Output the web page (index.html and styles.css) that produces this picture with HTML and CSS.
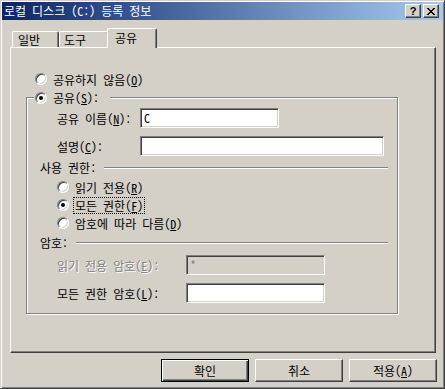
FILE: index.html
```html
<!DOCTYPE html>
<html lang="ko">
<head>
  <meta charset="UTF-8" />
  <title>로컬 디스크 (C:) 등록 정보</title>
  <link rel="stylesheet" href="styles.css">
</head>
<body>
  <div class="window">
    <!-- Caption -->
    <div class="titlebar">
      <span class="title">로컬 디스크 (C:) 등록 정보</span>
      <div class="caption-buttons">
        <span class="cbtn help">?</span>
        <span class="cbtn close">
          <svg width="8" height="7" viewBox="0 0 8 7"><path fill="#000" d="M0 0h2v1H0zM6 0h2v1H6zM1 1h2v1H1zM5 1h2v1H5zM2 2h4v1H2zM3 3h2v1H3zM2 4h4v1H2zM1 5h2v1H1zM5 5h2v1H5zM0 6h2v1H0zM6 6h2v1H6z"/></svg>
        </span>
      </div>
    </div>

    <!-- Tabs -->
    <div class="tabs">
      <div class="tab first">일반</div>
      <div class="tab second">도구</div>
      <div class="tab active">공유</div>
    </div>

    <div class="panel">
      <div class="option top">
        <span class="radio"></span><span>공유하지 않음(<u>O</u>)</span>
      </div>

      <fieldset class="group">
        <legend><span class="legend-inner"><span class="radio checked"></span><span>공유(<u>S</u>):</span></span></legend>

        <div class="field name-row">
          <span class="label">공유 이름(<u>N</u>):</span>
          <span class="input short">C</span>
        </div>
        <div class="field desc-row">
          <span class="label">설명(<u>C</u>):</span>
          <span class="input long"></span>
        </div>

        <div class="sep perm">사용 권한:<span class="line"></span></div>
        <div class="options">
          <div class="option"><span class="radio"></span><span class="text">읽기 전용(<u>R</u>)</span></div>
          <div class="option"><span class="radio checked"></span><span class="text focus">모든 권한(<u>F</u>)</span></div>
          <div class="option"><span class="radio"></span><span class="text">암호에 따라 다름(<u>D</u>)</span></div>
        </div>

        <div class="sep pass">암호:<span class="line"></span></div>
        <div class="field pw ro-row">
          <span class="label disabled">읽기 전용 암호(<u>E</u>):</span>
          <span class="input short off">*</span>
        </div>
        <div class="field pw full-row">
          <span class="label">모든 권한 암호(<u>L</u>):</span>
          <span class="input short"></span>
        </div>
      </fieldset>
    </div>

    <!-- Dialog buttons -->
    <div class="actions">
      <button class="btn default">확인</button>
      <button class="btn">취소</button>
      <button class="btn">적용(<u>A</u>)</button>
    </div>
  </div>
</body>
</html>
```

FILE: styles.css
```css
/* Classic grey dialog */
body {
  margin: 0;
  background-color: #d4d0c8;
  font-family: "Noto Sans CJK KR", sans-serif;
  font-size: 12px;
  /* half-width latin, like the old bitmap font */
  font-feature-settings: "hwid";
  color: #000;
}
.window {
  width: 445px;
  height: 389px;
  box-sizing: border-box;
  border: 1px solid;
  border-color: #d4d0c8 #404040 #404040 #d4d0c8;
  box-shadow: inset 1px 1px #fff, inset -1px -1px #808080;
  padding: 1px;
  background-color: #d4d0c8;
  display: flex;
  flex-direction: column;
}

/* Caption bar */
.titlebar {
  height: 18px;
  flex: none;
  display: flex;
  align-items: center;
  justify-content: space-between;
  padding: 0 4px 0 2px;
  background: linear-gradient(to right, #0a246a, #a6caf0);
  color: #fff;
}
.title {
  line-height: 18px;
  white-space: nowrap;
}
.caption-buttons {
  display: flex;
  gap: 2px;
}
.cbtn {
  width: 16px;
  height: 14px;
  box-sizing: border-box;
  background-color: #d4d0c8;
  border: 1px solid;
  border-color: #fff #404040 #404040 #fff;
  box-shadow: inset -1px -1px #808080;
  display: flex;
  align-items: center;
  justify-content: center;
  color: #000;
}
.help {
  font-family: "Liberation Sans", sans-serif;
  font-weight: bold;
  font-size: 11px;
  line-height: 12px;
}

/* Tabs */
.tabs {
  height: 27px;
  flex: none;
  display: flex;
  align-items: flex-end;
  padding-left: 10px;
}
.tab {
  height: 16px;
  box-sizing: border-box;
  border: 1px solid;
  border-color: #fff #404040 transparent #fff;
  border-bottom: none;
  border-radius: 2px 2px 0 0;
  box-shadow: inset -1px 0 #808080;
  padding-left: 5px;
  line-height: 15px;
}
.tab.first { width: 47px; }
.tab.second { width: 50px; padding-left: 4px; }
.tab.active {
  width: 50px;
  height: 20px;
  margin-left: -2px;
  margin-bottom: -1px;
  padding-left: 7px;
  line-height: 17px;
  background-color: #d4d0c8;
  position: relative;
  z-index: 1;
}

/* Page body */
.panel {
  height: 306px;
  flex: none;
  box-sizing: border-box;
  margin: 0 7px 0 8px;
  border: 1px solid;
  border-color: #fff #404040 #404040 #fff;
  box-shadow: inset -1px -1px #808080;
  padding: 22px 0 0 15px;
}
.option {
  display: flex;
  align-items: center;
  height: 18px;
}
.option.top {
  margin-left: 9px;
}
.radio {
  flex: none;
  width: 12px;
  height: 12px;
  box-sizing: border-box;
  border-radius: 50%;
  background-color: #fff;
  border: 1px solid;
  border-color: #808080 #fff #fff #808080;
  box-shadow: inset 1px 1px #404040, inset -1px -1px #d4d0c8;
  margin-right: 6px;
  display: flex;
  align-items: center;
  justify-content: center;
}
.radio.checked::after {
  content: "";
  width: 4px;
  height: 4px;
  border-radius: 50%;
  background-color: #000;
}

/* Group box */
.group {
  margin: 1px 0 0;
  width: 372px;
  box-sizing: border-box;
  border: 1px solid #808080;
  box-shadow: 1px 1px #fff, inset 1px 1px #fff;
  padding: 2px 0 10px 7px;
  min-inline-size: 0;
}
.group legend {
  padding: 0 11px 0 1px;
  background-color: #d4d0c8;
}
.legend-inner {
  display: flex;
  align-items: center;
  height: 17px;
}
.field {
  display: flex;
  align-items: center;
  height: 20px;
  margin-left: 23px;
}
.desc-row { margin-top: 8px; }
.ro-row { margin-top: 5px; }
.full-row { margin-top: 8px; }
.label {
  width: 83px;
  flex: none;
  white-space: nowrap;
}
.pw .label { width: 129px; }
.label.disabled {
  color: #808080;
  text-shadow: 1px 1px #fff;
}
.input {
  height: 20px;
  box-sizing: border-box;
  background-color: #fff;
  border: 1px solid;
  border-color: #808080 #fff #fff #808080;
  box-shadow: inset 1px 1px #404040, inset -1px -1px #d4d0c8;
  padding: 0 3px;
  line-height: 18px;
}
.input.short { width: 139px; }
.input.long { width: 244px; }
.input.off {
  background-color: #d4d0c8;
  color: #808080;
}

/* Etched separators */
.sep {
  display: flex;
  align-items: center;
  height: 16px;
  margin: 3px 9px 0 6px;
  white-space: nowrap;
}
.sep.pass { margin-top: 2px; }
.sep .line {
  flex: 1;
  height: 0;
  border-top: 1px solid #808080;
  border-bottom: 1px solid #fff;
  margin: 1px 0 0 8px;
}
.options {
  margin: 3px 0 0 23px;
}
.options .radio { margin-right: 4px; }
.text {
  border: 1px dotted transparent;
  padding: 0 1px;
  line-height: 15px;
}
.text.focus {
  border-color: #000;
}

/* Dialog buttons */
.actions {
  display: flex;
  justify-content: flex-end;
  gap: 6px;
  margin-top: 6px;
  padding-right: 6px;
}
.btn {
  width: 88px;
  height: 23px;
  box-sizing: border-box;
  margin: 0;
  padding: 0;
  font-family: "Noto Sans CJK KR", sans-serif;
  font-size: 12px;
  font-feature-settings: "hwid";
  line-height: 20px;
  color: #000;
  background-color: #d4d0c8;
  border: 1px solid;
  border-color: #fff #404040 #404040 #fff;
  box-shadow: inset -1px -1px #808080;
}
.btn.default {
  border-color: #000;
  box-shadow: inset 1px 1px #fff, inset -1px -1px #404040, inset -2px -2px #808080;
}
```
